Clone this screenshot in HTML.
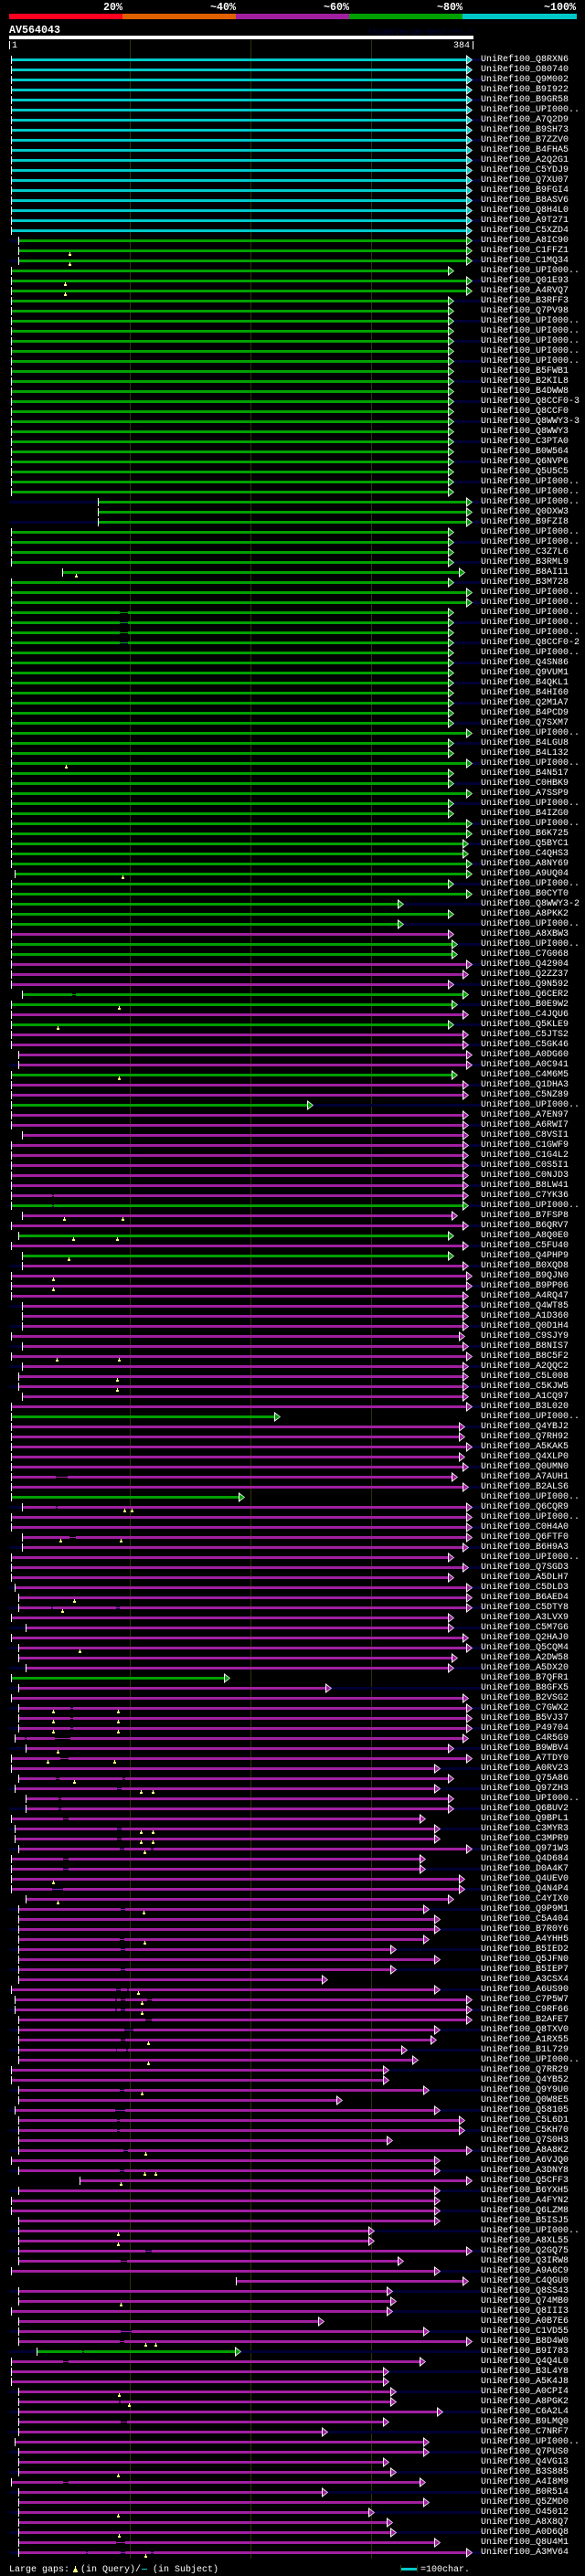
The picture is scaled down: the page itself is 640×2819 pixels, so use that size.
<!DOCTYPE html>
<html><head><meta charset="utf-8"><title>AV564043</title>
<style>
html,body{margin:0;padding:0;background:#000}
body{position:relative;width:640px;height:2819px;overflow:hidden;color:#fff;font:10px/11px "Liberation Mono",monospace}
.t{position:absolute;white-space:pre;line-height:12px}
.h{font-weight:bold;font-size:11.67px}
.x{position:absolute}
.v{position:absolute;top:44px;height:2756px;width:1px;background:#333300}
#rows{position:absolute;left:0;top:60px;width:640px}
p{margin:0;position:relative;height:11px;line-height:11px;padding-left:526px;width:114px;white-space:pre;--s:12px;--e:510px;--c:#a020a0;--z:transparent;--k:#000;
background:linear-gradient(#fff,#fff) var(--s) 1px/1px 9px no-repeat,linear-gradient(var(--c),var(--c)) var(--s) 4px/calc(var(--e) - var(--s)) 3px no-repeat,linear-gradient(var(--z),var(--z)) 10px 4px/517px 3px no-repeat}
p:nth-child(odd){--z:#000033;--k:#000033}
p::after{content:"";position:absolute;left:var(--e);top:0;width:7px;height:11px;background:#fff;clip-path:polygon(0 0,100% 50%,0 100%)}
p::before{content:"";position:absolute;z-index:1;left:calc(var(--e) + 1px);top:2px;width:5px;height:7px;background:var(--c);clip-path:polygon(0 0,100% 50%,0 100%)}
.c{--c:#00c8c8}.g{--c:#00a000}.m{--c:#a020a0}
.a{--s:16px}.b{--s:20px}.d{--s:24px}.f{--s:28px}
u{position:absolute;top:4px;height:3px;background:linear-gradient(var(--c),var(--c)) 0 1px/100% 1px no-repeat,var(--k)}
em{position:absolute;top:7px;width:3px;height:4px;background:linear-gradient(#ffff80,#ffff80) 1px 0/1px 2px no-repeat,linear-gradient(#ffff80,#ffff80) 0 2px/3px 2px no-repeat}
</style></head><body>
<div class="x" style="left:10px;top:15px;width:124px;height:6px;background:#ff0020"></div>
<div class="x" style="left:134px;top:15px;width:124px;height:6px;background:#e06000"></div>
<div class="x" style="left:258px;top:15px;width:124px;height:6px;background:#a020a0"></div>
<div class="x" style="left:382px;top:15px;width:124px;height:6px;background:#00a000"></div>
<div class="x" style="left:506px;top:15px;width:125px;height:6px;background:#00c8c8"></div>
<span class="t h" style="left:113px;top:2px">20%</span>
<span class="t h" style="left:230px;top:2px">~40%</span>
<span class="t h" style="left:354px;top:2px">~60%</span>
<span class="t h" style="left:478px;top:2px">~80%</span>
<span class="t h" style="left:595px;top:2px">~100%</span>
<span class="t h" style="left:10px;top:27px">AV564043</span>
<span class="t" style="left:402px;top:29px;font-size:8.33px;font-weight:bold;color:#000033">AlignView.pm Beta rel.7</span>
<div class="x" style="left:10px;top:39px;width:508px;height:4px;background:#fff"></div>
<div class="x" style="left:10px;top:45px;width:1px;height:9px;background:#fff"></div>
<span class="t" style="left:13px;top:45px;font-size:10px">1</span>
<span class="t" style="left:496px;top:45px;font-size:10px">384</span>
<div class="x" style="left:517px;top:45px;width:1px;height:9px;background:#fff"></div>
<div class="v" style="left:142px"></div>
<div class="v" style="left:274px"></div>
<div class="v" style="left:406px"></div>
<div id="rows">
<p class="c">UniRef100_Q8RXN6</p>
<p class="c">UniRef100_O80740</p>
<p class="c">UniRef100_Q9M002</p>
<p class="c">UniRef100_B9I922</p>
<p class="c">UniRef100_B9GR58</p>
<p class="c">UniRef100_UPI000..</p>
<p class="c">UniRef100_A7Q2D9</p>
<p class="c">UniRef100_B9SH73</p>
<p class="c">UniRef100_B7ZZV0</p>
<p class="c">UniRef100_B4FHA5</p>
<p class="c">UniRef100_A2Q2G1</p>
<p class="c">UniRef100_C5YDJ9</p>
<p class="c">UniRef100_Q7XU07</p>
<p class="c">UniRef100_B9FGI4</p>
<p class="c">UniRef100_B8ASV6</p>
<p class="c">UniRef100_Q8H4L0</p>
<p class="c">UniRef100_A9T271</p>
<p class="c">UniRef100_C5XZD4</p>
<p class="g b">UniRef100_A8IC90</p>
<p class="g b"><em style="left:75px"></em>UniRef100_C1FFZ1</p>
<p class="g b"><em style="left:75px"></em>UniRef100_C1MQ34</p>
<p class="g" style="--e:490px">UniRef100_UPI000..</p>
<p class="g"><em style="left:70px"></em>UniRef100_Q01E93</p>
<p class="g"><em style="left:70px"></em>UniRef100_A4RVQ7</p>
<p class="g" style="--e:490px">UniRef100_B3RFF3</p>
<p class="g" style="--e:490px">UniRef100_Q7PV98</p>
<p class="g" style="--e:490px">UniRef100_UPI000..</p>
<p class="g" style="--e:490px">UniRef100_UPI000..</p>
<p class="g" style="--e:490px">UniRef100_UPI000..</p>
<p class="g" style="--e:490px">UniRef100_UPI000..</p>
<p class="g" style="--e:490px">UniRef100_UPI000..</p>
<p class="g" style="--e:490px">UniRef100_B5FWB1</p>
<p class="g" style="--e:490px">UniRef100_B2KIL8</p>
<p class="g" style="--e:490px">UniRef100_B4DWW8</p>
<p class="g" style="--e:490px">UniRef100_Q8CCF0-3</p>
<p class="g" style="--e:490px">UniRef100_Q8CCF0</p>
<p class="g" style="--e:490px">UniRef100_Q8WWY3-3</p>
<p class="g" style="--e:490px">UniRef100_Q8WWY3</p>
<p class="g" style="--e:490px">UniRef100_C3PTA0</p>
<p class="g" style="--e:490px">UniRef100_B0W564</p>
<p class="g" style="--e:490px">UniRef100_Q6NVP6</p>
<p class="g" style="--e:490px">UniRef100_Q5U5C5</p>
<p class="g" style="--e:490px">UniRef100_UPI000..</p>
<p class="g" style="--e:490px">UniRef100_UPI000..</p>
<p class="g" style="--s:107px">UniRef100_UPI000..</p>
<p class="g" style="--s:107px">UniRef100_Q0DXW3</p>
<p class="g" style="--s:107px">UniRef100_B9FZI8</p>
<p class="g" style="--e:490px">UniRef100_UPI000..</p>
<p class="g" style="--e:490px">UniRef100_UPI000..</p>
<p class="g" style="--e:490px">UniRef100_C3Z7L6</p>
<p class="g" style="--e:490px">UniRef100_B3RML9</p>
<p class="g" style="--s:68px;--e:502px"><em style="left:82px"></em>UniRef100_B8AI11</p>
<p class="g" style="--e:490px">UniRef100_B3M728</p>
<p class="g">UniRef100_UPI000..</p>
<p class="g">UniRef100_UPI000..</p>
<p class="g" style="--e:490px"><u style="left:131px;width:9px"></u>UniRef100_UPI000..</p>
<p class="g" style="--e:490px"><u style="left:131px;width:9px"></u>UniRef100_UPI000..</p>
<p class="g" style="--e:490px"><u style="left:131px;width:9px"></u>UniRef100_UPI000..</p>
<p class="g" style="--e:490px"><u style="left:131px;width:9px"></u>UniRef100_Q8CCF0-2</p>
<p class="g" style="--e:490px">UniRef100_UPI000..</p>
<p class="g" style="--e:490px">UniRef100_Q4SN86</p>
<p class="g" style="--e:490px">UniRef100_Q9VUM1</p>
<p class="g" style="--e:490px">UniRef100_B4QKL1</p>
<p class="g" style="--e:490px">UniRef100_B4HI60</p>
<p class="g" style="--e:490px">UniRef100_Q2M1A7</p>
<p class="g" style="--e:490px">UniRef100_B4PCD9</p>
<p class="g" style="--e:490px">UniRef100_Q7SXM7</p>
<p class="g">UniRef100_UPI000..</p>
<p class="g" style="--e:490px">UniRef100_B4LGU8</p>
<p class="g" style="--e:490px">UniRef100_B4L132</p>
<p class="g"><em style="left:71px"></em>UniRef100_UPI000..</p>
<p class="g" style="--e:490px">UniRef100_B4N517</p>
<p class="g" style="--e:490px">UniRef100_C0HBK9</p>
<p class="g">UniRef100_A7SSP9</p>
<p class="g" style="--e:490px">UniRef100_UPI000..</p>
<p class="g" style="--e:490px">UniRef100_B4IZG0</p>
<p class="g">UniRef100_UPI000..</p>
<p class="g">UniRef100_B6K725</p>
<p class="g" style="--e:506px">UniRef100_Q5BYC1</p>
<p class="g" style="--e:506px">UniRef100_C4QHS3</p>
<p class="g">UniRef100_A8NY69</p>
<p class="g a"><em style="left:133px"></em>UniRef100_A9UQ04</p>
<p class="g" style="--e:490px">UniRef100_UPI000..</p>
<p class="g">UniRef100_B0CYT0</p>
<p class="g" style="--e:435px">UniRef100_Q8WWY3-2</p>
<p class="g" style="--e:490px">UniRef100_A8PKK2</p>
<p class="g" style="--e:435px">UniRef100_UPI000..</p>
<p class="m" style="--e:490px">UniRef100_A8XBW3</p>
<p class="g" style="--e:494px">UniRef100_UPI000..</p>
<p class="g" style="--e:494px">UniRef100_C7G068</p>
<p class="m">UniRef100_Q42904</p>
<p class="m" style="--e:506px">UniRef100_Q2ZZ37</p>
<p class="m" style="--e:490px">UniRef100_Q9N592</p>
<p class="g d" style="--e:506px"><u style="left:79px;width:4px"></u>UniRef100_Q6CER2</p>
<p class="g" style="--e:494px"><em style="left:129px"></em>UniRef100_B0E9W2</p>
<p class="m" style="--e:506px">UniRef100_C4JQU6</p>
<p class="g" style="--e:490px"><em style="left:62px"></em>UniRef100_Q5KLE9</p>
<p class="m" style="--e:506px">UniRef100_C5JTS2</p>
<p class="m" style="--e:506px">UniRef100_C5GK46</p>
<p class="m b">UniRef100_A0DG60</p>
<p class="m b">UniRef100_A0C941</p>
<p class="g" style="--e:494px"><em style="left:129px"></em>UniRef100_C4M6M5</p>
<p class="m" style="--e:506px">UniRef100_Q1DHA3</p>
<p class="m" style="--e:506px">UniRef100_C5NZ89</p>
<p class="g" style="--e:336px">UniRef100_UPI000..</p>
<p class="m" style="--e:506px">UniRef100_A7EN97</p>
<p class="m" style="--e:506px">UniRef100_A6RWI7</p>
<p class="m d" style="--e:506px">UniRef100_C8VSI1</p>
<p class="m" style="--e:506px">UniRef100_C1GWF9</p>
<p class="m" style="--e:506px">UniRef100_C1G4L2</p>
<p class="m" style="--e:506px">UniRef100_C0S5I1</p>
<p class="m" style="--e:506px">UniRef100_C0NJD3</p>
<p class="m" style="--e:506px">UniRef100_B8LW41</p>
<p class="m" style="--e:506px"><u style="left:57px;width:2px"></u>UniRef100_C7YK36</p>
<p class="g" style="--e:506px"><u style="left:57px;width:2px"></u>UniRef100_UPI000..</p>
<p class="m d" style="--e:494px"><em style="left:69px"></em><em style="left:133px"></em>UniRef100_B7FSP8</p>
<p class="m" style="--e:506px">UniRef100_B6QRV7</p>
<p class="g b" style="--e:490px"><em style="left:79px"></em><em style="left:127px"></em>UniRef100_A8Q0E0</p>
<p class="m" style="--e:506px">UniRef100_C5FU40</p>
<p class="g d" style="--e:490px"><em style="left:74px"></em>UniRef100_Q4PHP9</p>
<p class="m d" style="--e:506px">UniRef100_B0XQD8</p>
<p class="m"><em style="left:57px"></em>UniRef100_B9QJN0</p>
<p class="m"><em style="left:57px"></em>UniRef100_B9PP06</p>
<p class="m" style="--e:506px">UniRef100_A4RQ47</p>
<p class="m d" style="--e:506px">UniRef100_Q4WT85</p>
<p class="m d" style="--e:506px">UniRef100_A1D360</p>
<p class="m d" style="--e:506px">UniRef100_Q0D1H4</p>
<p class="m" style="--e:502px">UniRef100_C9SJY9</p>
<p class="m d" style="--e:506px">UniRef100_B8NIS7</p>
<p class="m"><em style="left:61px"></em><em style="left:129px"></em>UniRef100_B8C5F2</p>
<p class="m d" style="--e:506px">UniRef100_A2QQC2</p>
<p class="m b" style="--e:506px"><em style="left:127px"></em>UniRef100_C5L008</p>
<p class="m b" style="--e:506px"><em style="left:127px"></em>UniRef100_C5KJW5</p>
<p class="m d" style="--e:506px">UniRef100_A1CQ97</p>
<p class="m">UniRef100_B3L020</p>
<p class="g" style="--e:300px">UniRef100_UPI000..</p>
<p class="m" style="--e:502px">UniRef100_Q4YBJ2</p>
<p class="m" style="--e:502px">UniRef100_Q7RH92</p>
<p class="m">UniRef100_A5KAK5</p>
<p class="m" style="--e:502px">UniRef100_Q4XLP0</p>
<p class="m" style="--e:506px">UniRef100_Q0UMN0</p>
<p class="m" style="--e:494px"><u style="left:61px;width:13px"></u>UniRef100_A7AUH1</p>
<p class="m" style="--e:506px">UniRef100_B2ALS6</p>
<p class="g" style="--e:261px">UniRef100_UPI000..</p>
<p class="m d"><u style="left:61px;width:2px"></u><em style="left:135px"></em><em style="left:143px"></em>UniRef100_Q6CQR9</p>
<p class="m">UniRef100_UPI000..</p>
<p class="m">UniRef100_C0H4A0</p>
<p class="m d"><u style="left:76px;width:7px"></u><em style="left:65px"></em><em style="left:131px"></em>UniRef100_Q6FTF0</p>
<p class="m d" style="--e:506px">UniRef100_B6H9A3</p>
<p class="m" style="--e:490px">UniRef100_UPI000..</p>
<p class="m" style="--e:506px">UniRef100_Q7SGD3</p>
<p class="m" style="--e:490px">UniRef100_A5DLH7</p>
<p class="m a">UniRef100_C5DLD3</p>
<p class="m b"><em style="left:80px"></em>UniRef100_B6AED4</p>
<p class="m b"><u style="left:56px;width:2px"></u><u style="left:127px;width:4px"></u><em style="left:67px"></em>UniRef100_C5DTY8</p>
<p class="m" style="--e:490px">UniRef100_A3LVX9</p>
<p class="m f" style="--e:490px">UniRef100_C5M7G6</p>
<p class="m" style="--e:506px">UniRef100_Q2HAJ0</p>
<p class="m b"><em style="left:86px"></em>UniRef100_Q5CQM4</p>
<p class="m b" style="--e:494px">UniRef100_A2DW58</p>
<p class="m f" style="--e:490px">UniRef100_A5DX20</p>
<p class="g" style="--e:245px">UniRef100_B7QFR1</p>
<p class="m b" style="--e:356px">UniRef100_B8GFX5</p>
<p class="m" style="--e:506px">UniRef100_B2VSG2</p>
<p class="m b"><u style="left:77px;width:3px"></u><em style="left:57px"></em><em style="left:128px"></em>UniRef100_C7GWX2</p>
<p class="m b"><u style="left:77px;width:3px"></u><em style="left:57px"></em><em style="left:128px"></em>UniRef100_B5VJ37</p>
<p class="m b"><u style="left:77px;width:3px"></u><em style="left:57px"></em><em style="left:128px"></em>UniRef100_P49704</p>
<p class="m a" style="--e:506px"><u style="left:27px;width:2px"></u><u style="left:60px;width:17px"></u>UniRef100_C4R5G9</p>
<p class="m f" style="--e:490px"><em style="left:62px"></em>UniRef100_B9WBV4</p>
<p class="m"><u style="left:66px;width:9px"></u><em style="left:51px"></em><em style="left:124px"></em>UniRef100_A7TDY0</p>
<p class="m" style="--e:475px">UniRef100_A0RV23</p>
<p class="m b" style="--e:490px"><u style="left:61px;width:4px"></u><u style="left:134px;width:3px"></u><em style="left:80px"></em>UniRef100_Q75A86</p>
<p class="m a" style="--e:475px"><u style="left:128px;width:5px"></u><em style="left:153px"></em><em style="left:166px"></em>UniRef100_Q97ZH3</p>
<p class="m f" style="--e:490px"><u style="left:64px;width:3px"></u>UniRef100_UPI000..</p>
<p class="m f" style="--e:490px"><u style="left:64px;width:3px"></u>UniRef100_Q6BUV2</p>
<p class="m" style="--e:459px"><u style="left:69px;width:6px"></u>UniRef100_Q9BPL1</p>
<p class="m a" style="--e:475px"><u style="left:128px;width:5px"></u><em style="left:153px"></em><em style="left:166px"></em>UniRef100_C3MYR3</p>
<p class="m a" style="--e:475px"><u style="left:128px;width:5px"></u><em style="left:153px"></em><em style="left:166px"></em>UniRef100_C3MPR9</p>
<p class="m b"><u style="left:131px;width:5px"></u><u style="left:165px;width:3px"></u><em style="left:157px"></em>UniRef100_Q971W3</p>
<p class="m" style="--e:459px"><u style="left:69px;width:6px"></u>UniRef100_Q4D684</p>
<p class="m" style="--e:459px"><u style="left:69px;width:6px"></u>UniRef100_D0A4K7</p>
<p class="m" style="--e:502px"><em style="left:57px"></em>UniRef100_Q4UEV0</p>
<p class="m" style="--e:502px"><u style="left:57px;width:12px"></u>UniRef100_Q4N4P4</p>
<p class="m f" style="--e:490px"><em style="left:62px"></em>UniRef100_C4YIX0</p>
<p class="m b" style="--e:463px"><u style="left:132px;width:5px"></u><em style="left:156px"></em>UniRef100_Q9P9M1</p>
<p class="m b" style="--e:475px">UniRef100_C5A404</p>
<p class="m b" style="--e:475px">UniRef100_B7R0Y6</p>
<p class="m b" style="--e:463px"><u style="left:131px;width:5px"></u><em style="left:157px"></em>UniRef100_A4YHH5</p>
<p class="m b" style="--e:427px"><u style="left:132px;width:5px"></u>UniRef100_B5IED2</p>
<p class="m b" style="--e:475px">UniRef100_Q5JFN0</p>
<p class="m b" style="--e:427px"><u style="left:132px;width:5px"></u>UniRef100_B5IEP7</p>
<p class="m b" style="--e:352px">UniRef100_A3CSX4</p>
<p class="m" style="--e:475px"><u style="left:127px;width:5px"></u><u style="left:139px;width:2px"></u><em style="left:150px"></em>UniRef100_A6US90</p>
<p class="m a"><u style="left:126px;width:2px"></u><u style="left:132px;width:5px"></u><u style="left:161px;width:5px"></u><em style="left:154px"></em>UniRef100_C7P5W7</p>
<p class="m a"><u style="left:126px;width:2px"></u><u style="left:132px;width:5px"></u><em style="left:154px"></em>UniRef100_C9RF66</p>
<p class="m b"><u style="left:159px;width:7px"></u>UniRef100_B2AFE7</p>
<p class="m b" style="--e:475px"><u style="left:136px;width:10px"></u>UniRef100_Q8TXV0</p>
<p class="m b" style="--e:471px"><u style="left:132px;width:5px"></u><em style="left:161px"></em>UniRef100_A1RX55</p>
<p class="m b" style="--e:439px"><u style="left:127px;width:1px"></u><u style="left:138px;width:2px"></u>UniRef100_B1L729</p>
<p class="m b" style="--e:451px"><em style="left:161px"></em>UniRef100_UPI000..</p>
<p class="m" style="--e:419px">UniRef100_Q7RR29</p>
<p class="m" style="--e:419px">UniRef100_Q4YB52</p>
<p class="m b" style="--e:463px"><u style="left:131px;width:5px"></u><em style="left:154px"></em>UniRef100_Q9Y9U0</p>
<p class="m b" style="--e:368px">UniRef100_Q0W8E5</p>
<p class="m a" style="--e:475px"><u style="left:126px;width:11px"></u>UniRef100_Q58105</p>
<p class="m b" style="--e:502px"><u style="left:128px;width:3px"></u>UniRef100_C5L6D1</p>
<p class="m b" style="--e:502px"><u style="left:128px;width:3px"></u>UniRef100_C5KH70</p>
<p class="m b" style="--e:423px">UniRef100_Q7S0H3</p>
<p class="m b"><u style="left:135px;width:5px"></u><em style="left:158px"></em>UniRef100_A8A8K2</p>
<p class="m" style="--e:475px">UniRef100_A6VJQ0</p>
<p class="m b" style="--e:475px"><u style="left:131px;width:5px"></u><em style="left:157px"></em><em style="left:169px"></em>UniRef100_A3DNY8</p>
<p class="m" style="--s:87px"><em style="left:131px"></em>UniRef100_Q5CFF3</p>
<p class="m b" style="--e:475px">UniRef100_B6YXH5</p>
<p class="m" style="--e:475px">UniRef100_A4FYN2</p>
<p class="m" style="--e:475px">UniRef100_Q6LZM8</p>
<p class="m b" style="--e:475px">UniRef100_B5ISJ5</p>
<p class="m b" style="--e:403px"><em style="left:128px"></em>UniRef100_UPI000..</p>
<p class="m b" style="--e:403px"><em style="left:128px"></em>UniRef100_A8XL55</p>
<p class="m b"><u style="left:159px;width:7px"></u>UniRef100_Q2GQ75</p>
<p class="m b" style="--e:435px"><u style="left:132px;width:7px"></u>UniRef100_Q3IRW8</p>
<p class="m" style="--e:475px">UniRef100_A9A6C9</p>
<p class="m" style="--s:258px;--e:506px">UniRef100_C4QGU0</p>
<p class="m b" style="--e:423px">UniRef100_Q8SS43</p>
<p class="m b" style="--e:427px"><em style="left:131px"></em>UniRef100_Q74MB0</p>
<p class="m" style="--e:423px">UniRef100_Q8III3</p>
<p class="m b" style="--e:348px">UniRef100_A0B7E6</p>
<p class="m b" style="--e:463px"><u style="left:132px;width:12px"></u>UniRef100_C1VD55</p>
<p class="m b"><u style="left:131px;width:5px"></u><em style="left:158px"></em><em style="left:169px"></em>UniRef100_B8D4W0</p>
<p class="g" style="--s:40px;--e:257px"><u style="left:90px;width:2px"></u>UniRef100_B9I783</p>
<p class="m" style="--e:459px"><u style="left:69px;width:6px"></u>UniRef100_Q4Q4L0</p>
<p class="m" style="--e:419px">UniRef100_B3L4Y8</p>
<p class="m" style="--e:419px">UniRef100_A5K4J8</p>
<p class="m b" style="--e:427px"><em style="left:129px"></em>UniRef100_A0CPI4</p>
<p class="m b" style="--e:427px"><u style="left:130px;width:2px"></u><em style="left:140px"></em>UniRef100_A8PGK2</p>
<p class="m b" style="--e:478px">UniRef100_C6A2L4</p>
<p class="m b" style="--e:419px"><u style="left:132px;width:7px"></u>UniRef100_B9LMQ0</p>
<p class="m b" style="--e:352px">UniRef100_C7NRF7</p>
<p class="m a" style="--e:463px">UniRef100_UPI000..</p>
<p class="m b" style="--e:463px">UniRef100_Q7PUS0</p>
<p class="m b" style="--e:419px">UniRef100_Q4VG13</p>
<p class="m b" style="--e:427px"><em style="left:128px"></em>UniRef100_B3S885</p>
<p class="m" style="--e:459px"><u style="left:69px;width:6px"></u>UniRef100_A4I8M9</p>
<p class="m b" style="--e:352px">UniRef100_B0R514</p>
<p class="m b" style="--e:463px">UniRef100_Q5ZMD0</p>
<p class="m b" style="--e:403px"><em style="left:128px"></em>UniRef100_O45012</p>
<p class="m b" style="--e:423px">UniRef100_A8X8Q7</p>
<p class="m b" style="--e:427px"><em style="left:129px"></em>UniRef100_A0D6Q8</p>
<p class="m b" style="--e:475px"><u style="left:127px;width:10px"></u>UniRef100_Q8U4M1</p>
<p class="m b"><u style="left:94px;width:2px"></u><u style="left:132px;width:5px"></u><u style="left:165px;width:3px"></u><em style="left:158px"></em>UniRef100_A3MV64</p>
</div>
<span class="t" style="left:10px;top:2807px;font-size:10px;line-height:11px">Large gaps:</span>
<svg class="x" style="left:80px;top:2808px" width="5" height="7" viewBox="0 0 5 7"><path d="M2 0h1v3h1v2h1v2H0V5h1V3h1z" fill="#ffff80"/></svg>
<span class="t" style="left:88px;top:2807px;font-size:10px;line-height:11px">(in Query)/</span>
<div class="x" style="left:155px;top:2811px;width:6px;height:1px;background:#00c8c8"></div>
<span class="t" style="left:167px;top:2807px;font-size:10px;line-height:11px">(in Subject)</span>
<div class="x" style="left:438px;top:2807px;width:1px;height:8px;background:#333300"></div>
<div class="x" style="left:439px;top:2810px;width:17px;height:3px;background:#00c8c8"></div>
<div class="x" style="left:456px;top:2807px;width:1px;height:8px;background:#333300"></div>
<span class="t" style="left:460px;top:2807px;font-size:10px;line-height:11px">=100char.</span>
</body></html>
